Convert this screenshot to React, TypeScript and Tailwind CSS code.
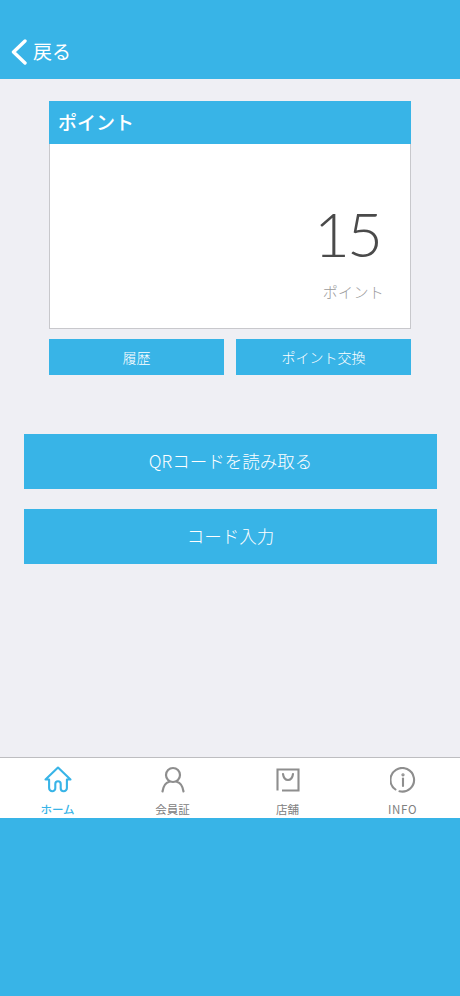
const jp = { fontFamily: '"Noto Sans CJK JP", "Noto Sans", sans-serif' }

function HomeIcon() {
  return (
    <svg width="28" height="28" viewBox="0 0 28 28" fill="none" stroke="#38b4e7" strokeWidth="2.1" strokeLinejoin="round" strokeLinecap="round">
      <path d="M1.5 13.5 14 1.5l12.5 12h-3.6v8.5a3.2 3.2 0 0 1-3.2 3.2 3 3 0 0 1-3-3v-4.2a2.7 2.7 0 0 0-5.4 0V22a3 3 0 0 1-3 3.2A3.2 3.2 0 0 1 5.1 22v-8.5z" />
    </svg>
  )
}

function PersonIcon() {
  return (
    <svg width="24" height="28" viewBox="0 0 24 28" fill="none" stroke="#8e8e8e" strokeWidth="2.2" strokeLinecap="round">
      <circle cx="12" cy="9" r="7" />
      <path d="M1.5 25.5c.8-5.5 3.6-9 6.8-9.8M22.5 25.5c-.8-5.5-3.6-9-6.8-9.8" />
    </svg>
  )
}

function BagIcon() {
  return (
    <svg width="24" height="24" viewBox="0 0 24 24" fill="none" stroke="#8e8e8e" strokeWidth="2.1">
      <path d="M1.5 22.5V1.5h21v21H6" />
      <path d="M7 6c.6 4.4 2.7 6 5 6s4.400-1.600 5-6" strokeLinecap="round" />
    </svg>
  )
}

function InfoIcon() {
  return (
    <svg width="26" height="26" viewBox="0 0 26 26" fill="none" stroke="#8e8e8e" strokeWidth="2.1" strokeLinecap="round">
      <path d="M5.500 22.500A11.800 11.800 0 1 1 9.500 24.300" />
      <path d="M13 11.500v7.500" />
      <circle cx="13" cy="7.800" r="0.600" fill="#8e8e8e" />
    </svg>
  )
}

function Tab({ icon, label, active, wide }: { icon: React.ReactNode; label: string; active?: boolean; wide?: boolean }) {
  return (
    <div className="flex flex-1 flex-col items-center">
      <div className="flex h-[30px] items-center justify-center">{icon}</div>
      <span className={`mt-[7px] text-[11.500px] leading-[14px] ${active ? 'font-medium text-[#38b4e7]' : 'text-[#808080]'} ${wide ? 'tracking-[0.700px]' : ''}`}>{label}</span>
    </div>
  )
}

export default function App() {
  return (
    <div className="flex h-[996px] w-[460px] flex-col overflow-hidden bg-[#38b4e7]" style={jp}>
      {/* Header */}
      <div className="flex h-[79px] shrink-0 items-end bg-[#38b4e7] pb-[14px] pl-[11px]">
        <svg width="16" height="26" viewBox="0 0 16 26" fill="none" stroke="#fff" strokeWidth="3.400" strokeLinecap="round" strokeLinejoin="round">
          <path d="M14 2 2.500 13 14 24" />
        </svg>
        <span className="mb-px ml-[6px] text-[19px] leading-[26px] text-white">戻る</span>
      </div>

      {/* Content */}
      <div className="flex h-[678px] shrink-0 flex-col bg-[#efeff4] pt-[22px]">
        <div className="mx-[49px] flex h-[228px] flex-col border-r border-b border-l border-[#c8c8cc] bg-white">
          <div className="-mx-px flex h-[43px] items-center bg-[#38b4e7] pl-[9px] text-[19px] font-medium text-white">ポイント</div>
          <div className="flex flex-1 flex-col items-end pr-[27px]">
            <span className="mt-[49px] mr-[3px] text-[62px] leading-[80px] font-light tracking-[-3px] text-[#4a4a4a]" style={{ fontFamily: 'Lato, sans-serif' }}>15</span>
            <span className="mt-[8px] -mr-px text-[15px] leading-[22px] font-light tracking-[0.300px] text-[#9a9a9a]">ポイント</span>
          </div>
        </div>

        <div className="mx-[49px] mt-[10px] flex gap-[12px]">
          <button className="h-[36px] flex-1 bg-[#38b4e7] text-[14px] font-light text-white">履歴</button>
          <button className="h-[36px] flex-1 bg-[#38b4e7] text-[14px] font-light text-white">ポイント交換</button>
        </div>

        <div className="mt-[59px] mr-[23px] ml-[24px] flex flex-col gap-[20px]">
          <button className="h-[55px] bg-[#38b4e7] text-[17.500px] font-light text-white">QRコードを読み取る</button>
          <button className="h-[55px] bg-[#38b4e7] text-[17.500px] font-light text-white">コード入力</button>
        </div>
      </div>

      {/* Tab bar */}
      <div className="flex h-[61px] shrink-0 border-t border-[#bdbdc0] bg-white pt-[7px]">
        <Tab icon={<HomeIcon />} label="ホーム" active />
        <Tab icon={<PersonIcon />} label="会員証" />
        <Tab icon={<BagIcon />} label="店舗" />
        <Tab icon={<InfoIcon />} label="INFO" wide />
      </div>
    </div>
  )
}
